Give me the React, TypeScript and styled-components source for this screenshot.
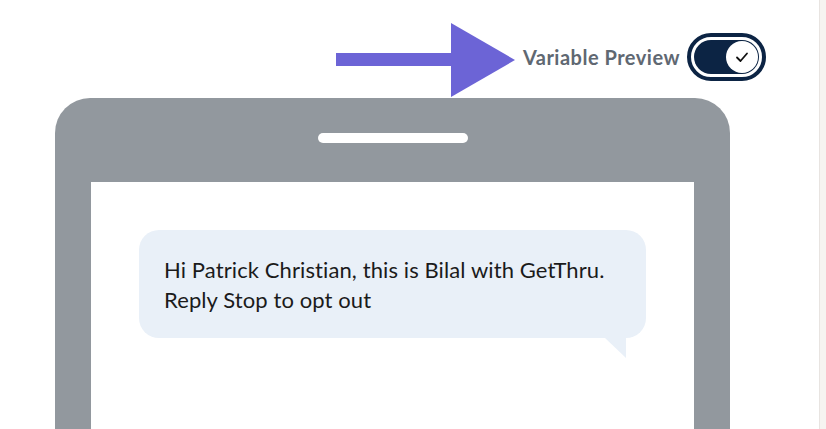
import React from "react";
import styled, { createGlobalStyle } from "styled-components";

const GlobalStyle = createGlobalStyle`
  html, body {
    margin: 0;
    padding: 0;
    background: #ffffff;
    overflow: hidden;
  }
  body {
    font-family: Lato, "Noto Sans", "Liberation Sans", sans-serif;
  }
`;

const App = () => {
  return (
    <Page>
      <GlobalStyle />
      <Main>
        <Header>
          <Arrow width="180" height="76" viewBox="0 0 180 76">
            <rect x="0" y="31" width="117" height="13" fill="#6c64d6" />
            <polygon points="115,1 179,38 115,75" fill="#6c64d6" />
          </Arrow>
          <Label>Variable Preview</Label>
          <Toggle role="switch" aria-checked="true">
            <Track>
              <Knob>
                <svg width="14" height="12" viewBox="0 0 14 12">
                  <path
                    d="M2 6.5 L5.5 10 L12 2.5"
                    fill="none"
                    stroke="#111"
                    strokeWidth="1.8"
                    strokeLinecap="round"
                    strokeLinejoin="round"
                  />
                </svg>
              </Knob>
            </Track>
          </Toggle>
        </Header>
        <Phone>
          <Speaker />
          <Screen>
            <Bubble>
              Hi Patrick Christian, this is Bilal with GetThru.
              <br />
              Reply Stop to opt out
            </Bubble>
          </Screen>
        </Phone>
      </Main>
      <SidePanel />
    </Page>
  );
};

export default App;

const Page = styled.div`
  display: flex;
  width: 826px;
  height: 429px;
  overflow: hidden;
`;

const Main = styled.div`
  width: 819px;
  display: flex;
  flex-direction: column;
  padding: 22px 53px 0 55px;
  box-sizing: border-box;
`;

const SidePanel = styled.div`
  flex: 1;
  background: #f6f4f1;
  border-left: 1px solid #e8e4e1;
`;

const Header = styled.div`
  height: 77px;
  display: flex;
  align-items: center;
  justify-content: flex-end;
`;

const Arrow = styled.svg`
  display: block;
  margin-right: 7px;
`;

const Label = styled.span`
  font-size: 20px;
  font-weight: 700;
  letter-spacing: 0.5px;
  color: #606872;
  margin-top: -6px;
  margin-right: 7px;
`;

const Toggle = styled.div`
  width: 79px;
  height: 48px;
  box-sizing: border-box;
  border: 4px solid #0c2444;
  border-radius: 24px;
  padding: 3px;
  background: #ffffff;
  margin-top: -6px;
  cursor: pointer;
`;

const Track = styled.div`
  height: 100%;
  border-radius: 17px;
  background: #0c2444;
  display: flex;
  align-items: center;
  justify-content: flex-end;
  padding: 0 1px;
`;

const Knob = styled.div`
  width: 32px;
  height: 32px;
  border-radius: 50%;
  background: #ffffff;
  display: flex;
  align-items: center;
  justify-content: center;
`;

const Phone = styled.div`
  width: 675px;
  height: 360px;
  flex-shrink: 0;
  background: #92989e;
  border-radius: 35px 35px 0 0;
  padding: 35px 36px 0;
  box-sizing: border-box;
  display: flex;
  flex-direction: column;
`;

const Speaker = styled.div`
  width: 150px;
  height: 10px;
  border-radius: 5px;
  background: #ffffff;
  align-self: center;
  margin-bottom: 39px;
`;

const Screen = styled.div`
  flex: 1;
  background: #ffffff;
  padding: 48px 48px 0;
`;

const Bubble = styled.div`
  position: relative;
  width: 507px;
  box-sizing: border-box;
  padding: 25px 25px 23px;
  background: #e9f0f8;
  border-radius: 20px;
  font-size: 22px;
  line-height: 30px;
  letter-spacing: 0.1px;
  color: #1b1b1b;

  &::after {
    content: "";
    position: absolute;
    right: 20px;
    bottom: -20px;
    width: 0;
    height: 0;
    border-left: 21px solid transparent;
    border-top: 20px solid #e9f0f8;
  }
`;
